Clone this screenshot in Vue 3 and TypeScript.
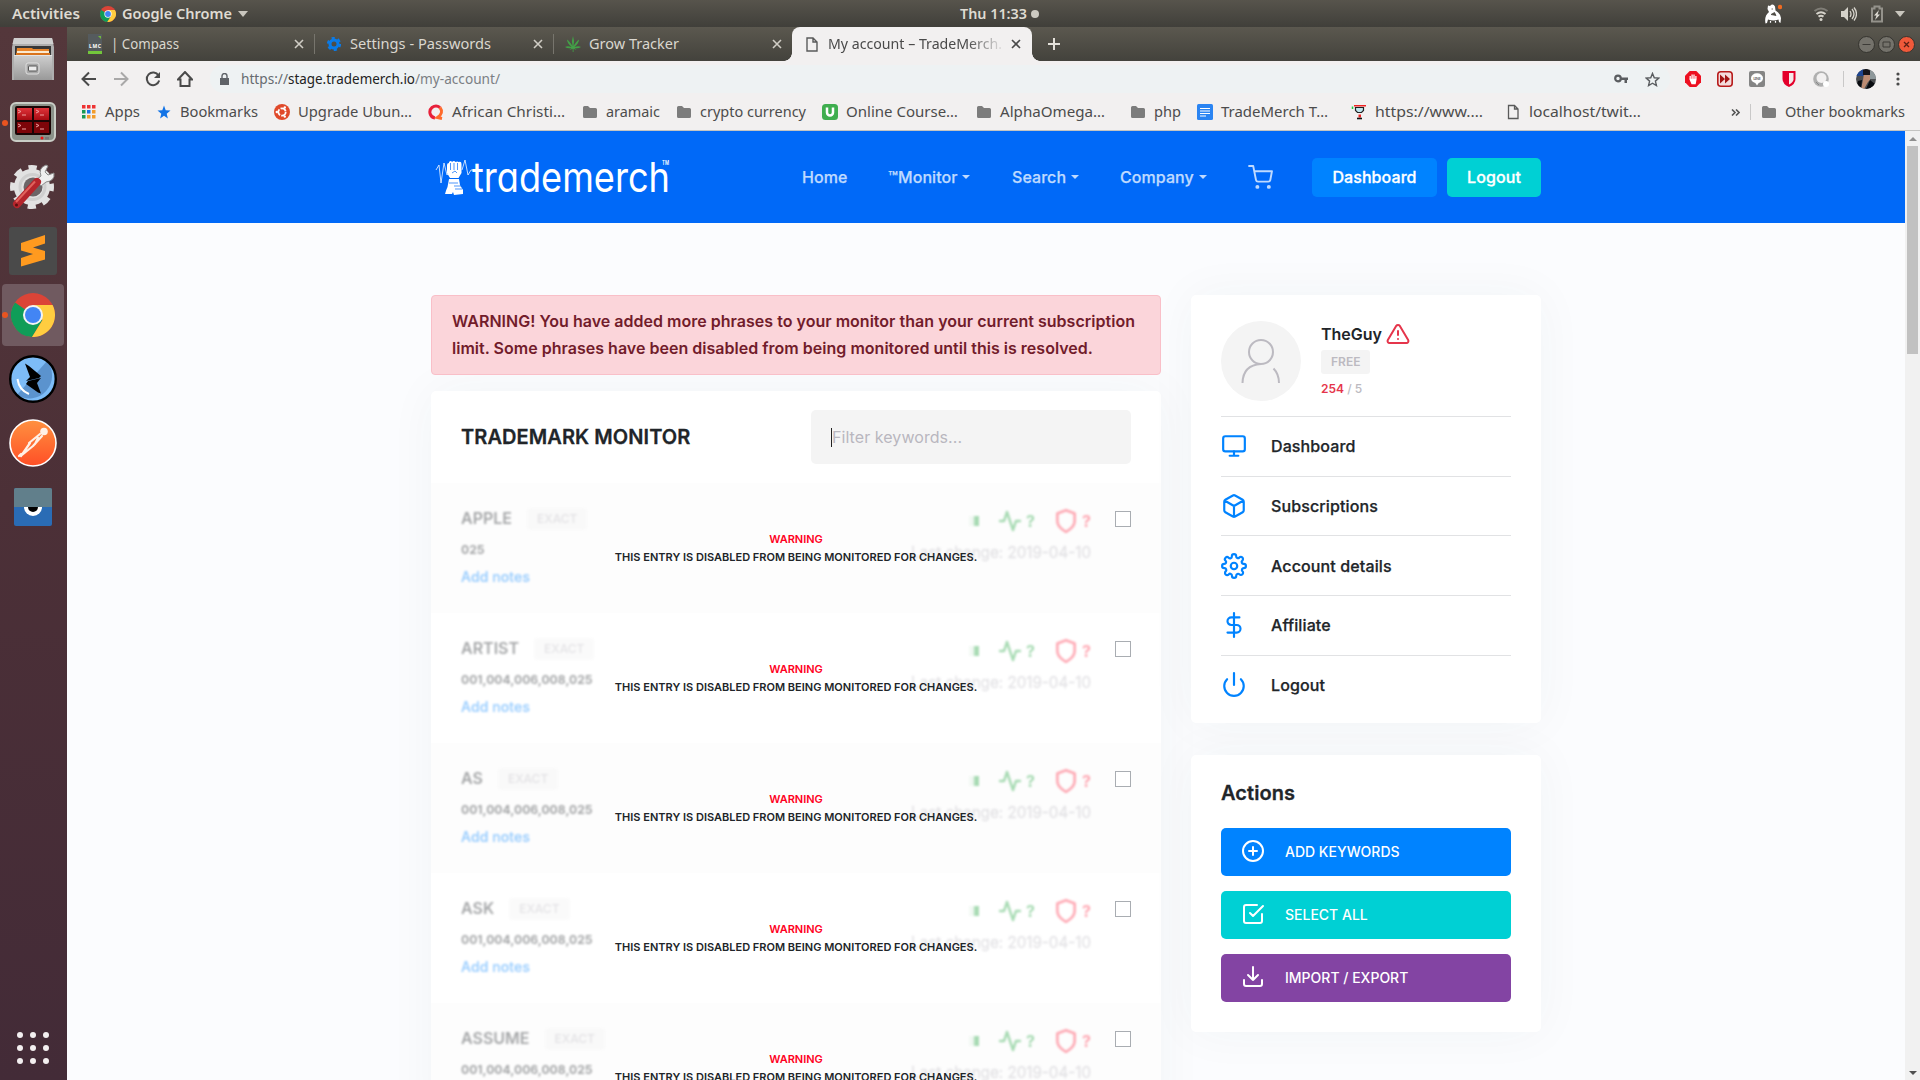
<script setup lang="ts">
import { h, type FunctionalComponent } from 'vue'

interface Bookmark { icon: string; label: string; w: number; gap: number }
interface Keyword { name: string; classes: string }

/* Single-line label set to an exact width, so the bars keep their rhythm with any UI font. */
const FitText: FunctionalComponent<{ text: string; w: number; size?: number }> = (p) =>
  h('svg', { width: p.w, height: 22, viewBox: `0 0 ${p.w} 22`, class: 'fit', overflow: 'visible' }, [
    h('text', {
      x: 0, y: 16, textLength: p.w, lengthAdjust: 'spacingAndGlyphs',
      'font-size': p.size ?? 15, fill: 'currentColor', 'xml:space': 'preserve',
    }, p.text),
  ])
FitText.props = ['text', 'w', 'size']

const bookmarks: Bookmark[] = [
  { icon: 'apps', label: 'Apps', w: 35, gap: 0 },
  { icon: 'star', label: 'Bookmarks', w: 78, gap: 16 },
  { icon: 'ubuntu', label: 'Upgrade Ubun…', w: 114, gap: 16 },
  { icon: 'q', label: 'African Christi…', w: 113, gap: 16 },
  { icon: 'folder', label: 'aramaic', w: 54, gap: 17 },
  { icon: 'folder', label: 'crypto currency', w: 106, gap: 16 },
  { icon: 'u', label: 'Online Course…', w: 112, gap: 16 },
  { icon: 'folder', label: 'AlphaOmega…', w: 105, gap: 18 },
  { icon: 'folder', label: 'php', w: 27, gap: 25 },
  { icon: 'doc', label: 'TradeMerch T…', w: 107, gap: 16 },
  { icon: 'bot', label: 'https://www.…', w: 108, gap: 23 },
  { icon: 'file', label: 'localhost/twit…', w: 112, gap: 22 },
]

const keywords: Keyword[] = [
  { name: 'APPLE', classes: '025' },
  { name: 'ARTIST', classes: '001,004,006,008,025' },
  { name: 'AS', classes: '001,004,006,008,025' },
  { name: 'ASK', classes: '001,004,006,008,025' },
  { name: 'ASSUME', classes: '001,004,006,008,025' },
]

const menu = ['Dashboard', 'Subscriptions', 'Account details', 'Affiliate', 'Logout']
const dots = [0, 1, 2, 3, 4, 5, 6, 7, 8]
const appColors = ['#e33', '#e33', '#e33', '#1a9a55', '#1a73e8', '#f29c2b', '#1a9a55', '#f29c2b', '#f29c2b']
</script>

<template>
  <div class="desktop">
    <header class="topbar">
      <FitText class="act" text="Activities" :w="68" :size="14.5" />
      <svg class="tb-chrome" width="16" height="16" viewBox="0 0 44 44">
        <circle cx="22" cy="22" r="22" fill="#db4437" />
        <path d="M22 22L3 11A22 22 0 0 0 20 44l11-17z" fill="#0f9d58" />
        <path d="M22 11h19A22 22 0 0 1 20 44l11-17z" fill="#ffcd40" />
        <circle cx="22" cy="22" r="10" fill="#fff" /><circle cx="22" cy="22" r="8" fill="#4285f4" />
      </svg>
      <FitText text="Google Chrome" :w="110" :size="14.5" />
      <i class="tri"></i>
      <FitText class="clock" text="Thu 11:33" :w="67" :size="14.5" />
      <i class="dot"></i>
      <span class="grow"></span>
      <svg width="18" height="20" viewBox="0 0 18 20" class="keybase">
        <path d="M4 1.500l2 .5q3-3 5 .5l.5 4Q16 9 17 14l-.5 5-1.500-1-.5-2.500q-5 2-10.500 0L3 19l-1.500.500Q0 12 5 8L3.500 5z" fill="#fff" />
        <path d="M7 10.500l3.500-2 1.500 3zM7.500 5h1.500" stroke="#4b4943" fill="#4b4943" stroke-width=".8" /><path d="M6.500 17v1.800M11.500 17v1.800" stroke="#fff" stroke-width="1.200" />
        <circle cx="16" cy="3" r="2.200" fill="#f26b21" />
      </svg>
      <svg class="wifi" width="16" height="16" viewBox="0 0 16 16" fill="none" stroke="#d6d3cb" stroke-width="2">
        <path d="M1.500 5Q8 0 14.500 5" stroke="#7f7d76" /><path d="M3.500 8Q8 4.500 12.500 8M5.500 10.600Q8 8.800 10.500 10.600" />
        <circle cx="8" cy="13.500" r="1.500" fill="#d6d3cb" stroke="none" />
      </svg>
      <svg class="vol" width="16" height="16" viewBox="0 0 16 16">
        <path d="M0 5h3l4-4v14l-4-4H0z" fill="#d6d3cb" />
        <path d="M9 5q2 3 0 6M11 3q4 5 0 10M13 1.500q5 6.500 0 13" fill="none" stroke="#d6d3cb" stroke-width="1.300" />
      </svg>
      <svg class="bat" width="14" height="18" viewBox="0 0 14 18">
        <path d="M2 3.500h2.500v-2h5v2H12v13H2z" fill="none" stroke="#94928b" stroke-width="2" />
        <path d="M9 5L4 10.500h2.500L5 15l5-5.500H7.500z" fill="#dedbd3" />
      </svg>
      <i class="tri end"></i>
    </header>

    <div class="work">
      <aside class="dock">
        <div class="slot">
          <svg width="44" height="46" viewBox="0 0 44 46">
            <defs><linearGradient id="cab" x2="0" y2="1"><stop stop-color="#cfcfcf" /><stop offset="1" stop-color="#999" /></linearGradient></defs>
            <path d="M3 2h38l2 9v33H1V11z" fill="#aeaeae" /><path d="M3 2h38l1.500 6h-41z" fill="#cfcfcf" />
            <rect x="4" y="10" width="36" height="11" fill="#383838" /><path d="M6 12h15l1 1h16v8H5z" fill="#e8842a" />
            <rect x="6" y="15" width="32" height="2" fill="#fbe9cf" /><rect x="5" y="17" width="34" height="2" fill="#d9731c" />
            <path d="M3 19h38v25H3z" fill="url(#cab)" /><path d="M3 19.500h38" stroke="#e4e4e4" />
            <rect x="15" y="27" width="13" height="11" rx="2" fill="#a8a8a8" stroke="#e0e0e0" />
            <rect x="17.500" y="30" width="8.500" height="5" rx=".5" fill="#ececec" stroke="#555" />
          </svg>
        </div>
        <div class="slot">
          <i class="run"></i>
          <svg width="48" height="44" viewBox="0 0 48 44">
            <defs><linearGradient id="tr" x2="0" y2="1"><stop stop-color="#e0333a" /><stop offset="1" stop-color="#a60b12" /></linearGradient></defs>
            <rect x="2" y="2" width="44" height="38" rx="5" fill="#8b9189" stroke="#c9cdc6" stroke-width="2" />
            <rect x="6" y="5" width="36" height="29" rx="2" fill="#1b0505" />
            <path d="M8 7h15v12H8zM25 7h15v12H25z" fill="url(#tr)" /><path d="M8 21h15v11H8zM25 21h15v11H25z" fill="#7d0509" />
            <path d="M9 9l3 1.500L9 12M13 14h4M27 9l3 1.500-3 1.500M31 14h4M9 23l3 1.500L9 26M13 28h4M27 23l3 1.500-3 1.500M31 28h4" stroke="#eea0a0" fill="none" />
            <circle cx="33" cy="37" r="1.500" fill="#e11" /><rect x="36" y="36" width="4" height="2.500" fill="#777" />
          </svg>
        </div>
        <div class="slot">
          <svg width="46" height="48" viewBox="0 0 46 48">
            <circle cx="22" cy="24" r="18" fill="#e2e2e2" /><circle cx="22" cy="24" r="19.500" fill="none" stroke="#e2e2e2" stroke-width="5" stroke-dasharray="8.300 7.016" stroke-dashoffset="4.150" />
            <circle cx="22.500" cy="24" r="12.500" fill="none" stroke="#cfcfcf" stroke-width="3" /><circle cx="23" cy="24" r="9.500" fill="#6c6567" />
            <path d="M26 17l5-4q-3-8 5-11l2 1-3 6 3 3 6-2q1 8-8 9l-5 4z" fill="#efefef" stroke="#8a8a8a" />
            <path d="M27 19L7 41" stroke="#b5252c" stroke-width="8" stroke-linecap="round" /><path d="M25 18.500L6 39" stroke="#e0625c" stroke-width="2" />
            <circle cx="6.500" cy="42" r="1.500" fill="#5a1010" />
          </svg>
        </div>
        <div class="slot">
          <svg width="48" height="48" viewBox="0 0 48 48">
            <rect width="48" height="48" rx="3" fill="#4a4a4a" /><path d="M12 16l24-8v8.500l-12 4 12 3.500v8.500L12 39.500V31l12-4-12-3.500z" fill="#ff9a1f" />
          </svg>
        </div>
        <div class="slot on">
          <i class="run"></i>
          <svg width="44" height="44" viewBox="0 0 44 44">
            <circle cx="22" cy="22" r="22" fill="#db4437" />
            <path d="M22 22L4 9.400A22 22 0 0 0 21 44l10.500-17z" fill="#0f9d58" />
            <path d="M22 12h19.600A22 22 0 0 1 21 44l10.500-17z" fill="#ffcd40" />
            <circle cx="22" cy="22" r="10" fill="#f4f4f4" /><circle cx="22" cy="22" r="8" fill="#4285f4" />
          </svg>
        </div>
        <div class="slot">
          <svg width="48" height="48" viewBox="0 0 48 48">
            <circle cx="24" cy="24" r="23" fill="#7dbcf7" /><path d="M38 6A23 23 0 0 1 8 40z" fill="#5b93ce" />
            <circle cx="24" cy="24" r="22.800" fill="none" stroke="#000" stroke-width="2.400" />
            <path d="M16 8.500l4 2.500 12 10-2 2-13 3 4-4zM32 38.500l-3-1-12-8.500 2-3 13-3-4 5z" fill="#000" /><path d="M8.500 24Q10 35 20 39" stroke="#fff" stroke-width="2" fill="none" />
          </svg>
        </div>
        <div class="slot">
          <svg width="48" height="48" viewBox="0 0 48 48">
            <defs><linearGradient id="pm" x2="0" y2="1"><stop stop-color="#ff9140" /><stop offset="1" stop-color="#ff4f26" /></linearGradient></defs>
            <circle cx="24" cy="24" r="23" fill="url(#pm)" stroke="#fff" stroke-width="1.600" /><circle cx="35" cy="12.500" r="3.800" fill="#fff0e6" />
            <path d="M31 15L20 24M33 17L24 27M29 19l-3 6M21 24L12 37M24 27L13 36M12 35l-2 2" stroke="#fff0e6" stroke-width="2.200" fill="none" stroke-linecap="round" />
          </svg>
        </div>
        <div class="slot">
          <svg width="38" height="38" viewBox="0 0 38 38">
            <rect width="38" height="38" rx="2" fill="#2a6cb5" /><path d="M0 19V2q0-2 2-2h34q2 0 2 2v17z" fill="#617f8b" />
            <path d="M10 19h18a9 9 0 0 1-18 0z" fill="#fff" /><path d="M14 19h10a5 5 0 0 1-10 0z" fill="#000" />
          </svg>
        </div>
        <div class="launcher"><i v-for="d in dots" :key="d"></i></div>
      </aside>

      <main class="browser">
        <div class="tabs">
          <div class="tab t1">
            <svg width="14" height="20" viewBox="0 0 14 20"><path d="M0 0h14v20H0z" fill="#555b5e" /><path d="M10 2l3 0 0 3z" fill="#73b83b" /><text x="1" y="14" font-size="5" font-weight="700" fill="#fff" textLength="12">LMC</text><path d="M0 17h14v3H0z" fill="#73c63b" /></svg>
            <FitText text="| Compass" :w="68" /><span class="grow"></span>
            <svg class="x" viewBox="0 0 10 10"><path d="M1 1l8 8M9 1L1 9" /></svg>
          </div>
          <div class="tab t2">
            <svg width="14" height="14" viewBox="0 0 14 14"><circle cx="7" cy="7" r="4" fill="none" stroke="#0a7be8" stroke-width="3" /><circle cx="7" cy="7" r="6" fill="none" stroke="#0a7be8" stroke-width="2.200" stroke-dasharray="3.140 3.140" /></svg>
            <FitText text="Settings - Passwords" :w="141" /><span class="grow"></span>
            <svg class="x" viewBox="0 0 10 10"><path d="M1 1l8 8M9 1L1 9" /></svg>
          </div>
          <div class="tab t3">
            <svg width="16" height="16" viewBox="0 0 16 16"><path d="M8 0q2 5 .5 10Q11.500 5 14 3.500q0 3.500-4.500 7.500 4-1.500 6.500 0-3 2-6.500 1l2 2-3-1.200V16h-.8v-3.200L4.500 14l2-2q-3.500 1-6.500-1 2.500-1.500 6.500 0Q2 7 2 3.500 4.500 5 7.500 10 6 5 8 0z" fill="#43a047" /></svg>
            <FitText text="Grow Tracker" :w="90" /><span class="grow"></span>
            <svg class="x" viewBox="0 0 10 10"><path d="M1 1l8 8M9 1L1 9" /></svg>
          </div>
          <div class="tab active">
            <svg width="12" height="15" viewBox="0 0 12 15" fill="none" stroke="#5a5a5a" stroke-width="1.400"><path d="M1 1h6l4 4v9H1zM7 1v4h4" /></svg>
            <FitText class="fade" text="My account – TradeMerch." :w="174" /><span class="grow"></span>
            <svg class="x" viewBox="0 0 10 10"><path d="M1 1l8 8M9 1L1 9" /></svg>
          </div>
          <svg class="plus" width="12" height="12" viewBox="0 0 12 12"><path d="M6 0v12M0 6h12" stroke="#e4e1da" stroke-width="2" /></svg>
          <span class="grow"></span>
          <div class="wins">
            <svg viewBox="0 0 17 17"><circle cx="8.500" cy="8.500" r="8" fill="#74726b" stroke="#35342f" /><path d="M4.500 8.500h8" stroke="#3c3b37" /></svg>
            <svg viewBox="0 0 17 17"><circle cx="8.500" cy="8.500" r="8" fill="#74726b" stroke="#35342f" /><path d="M5 6h7v5H5z" stroke="#3c3b37" fill="none" /></svg>
            <svg viewBox="0 0 17 17"><circle cx="8.500" cy="8.500" r="8" fill="#f0593a" stroke="#35342f" /><path d="M6 6l5 5M11 6l-5 5" stroke="#5c2015" stroke-width="1.300" /></svg>
          </div>
        </div>

        <div class="toolbar">
          <svg class="nv" viewBox="0 0 16 16"><path d="M15 8H2M8 1.500L1.500 8 8 14.500" /></svg>
          <svg class="nv off" viewBox="0 0 16 16"><path d="M1 8h13M8 1.500L14.500 8 8 14.500" /></svg>
          <svg class="nv" viewBox="0 0 16 16"><path d="M13.500 4.500A6.300 6.300 0 1 0 14.200 9.500" /><path d="M15 1v6H9z" fill="#4a4a4a" stroke="none" /></svg>
          <svg class="nv" viewBox="0 0 16 16"><path d="M1 8.500L8 1l7 7.500H12.500V15h-9V8.500z" /></svg>
          <div class="omni">
            <svg width="9" height="12" viewBox="0 0 9 12"><path d="M0 5h9v7H0z" fill="#5f6368" /><path d="M2 5V3a2.500 2.500 0 0 1 5 0v2" fill="none" stroke="#5f6368" stroke-width="1.400" /></svg>
            <svg class="url" width="260" height="22" viewBox="0 0 260 22" font-size="15"><text x="0" y="16" textLength="47" lengthAdjust="spacingAndGlyphs" fill="#666b70">https://</text><text x="47" y="16" textLength="127" lengthAdjust="spacingAndGlyphs" fill="#222">stage.trademerch.io</text><text x="174" y="16" textLength="85" lengthAdjust="spacingAndGlyphs" fill="#7b7f84">/my-account/</text></svg>
            <span class="grow"></span>
            <svg width="14" height="10" viewBox="0 0 14 10"><circle cx="4" cy="4.500" r="2.800" fill="none" stroke="#5a5d60" stroke-width="2.200" /><path d="M7 3.500h7v2.500h-1v3h-2.500V6H7z" fill="#5a5d60" /></svg>
            <svg class="fav" width="15" height="15" viewBox="0 0 16 16"><path d="M8 1.500l1.900 4.600 4.900.4-3.700 3.200 1.100 4.800L8 12l-4.200 2.500 1.100-4.800L1.200 6.500l4.900-.4z" fill="none" stroke="#5a5d60" stroke-width="1.500" /></svg>
          </div>
          <div class="ext">
            <svg viewBox="0 0 16 16"><path d="M4.700 0h6.600L16 4.700v6.600L11.300 16H4.700L0 11.300V4.700z" fill="#ed1021" /><path d="M5.200 9V5M7.100 8V3.500M9 8V3.500M10.900 9V5M5.200 8.500h5.700l-.8 4H7z" stroke="#fff" stroke-width="1.300" fill="#fff" /></svg>
            <svg viewBox="0 0 16 16"><rect x=".8" y=".8" width="14.400" height="14.400" rx="3" fill="#f4dcdc" stroke="#b71c1c" stroke-width="1.600" /><path d="M3 3.500L8 8l-5 4.500zM8 3.500L13 8l-5 4.500z" fill="#a31515" /></svg>
            <svg viewBox="0 0 16 16"><rect width="16" height="16" rx="2" fill="#858585" /><ellipse cx="8" cy="7.300" rx="6" ry="5" fill="#fff" /><path d="M6 11.500l2 3 2-3" fill="#fff" /><text x="4.200" y="9" font-size="4" font-weight="700" textLength="7.600" fill="#777">LINE</text></svg>
            <svg viewBox="0 0 16 16"><path d="M1.500 0h13v8q0 5-6.500 8-6.500-3-6.500-8z" fill="#e4002b" /><path d="M8 2h4.500v6.500Q12 11.500 8 13.500z" fill="#f4e9ea" /></svg>
            <svg viewBox="0 0 16 16"><circle cx="8" cy="8" r="7.800" fill="#b0b0b0" /><circle cx="8.500" cy="7" r="5" fill="#f2f0f0" /><circle cx="13" cy="13" r="3" fill="#fff" /><path d="M3 11l3 3" stroke="#888" /></svg>
          </div>
          <i class="vsep"></i>
          <svg class="me" width="20" height="20" viewBox="0 0 20 20"><defs><clipPath id="face"><circle cx="10" cy="10" r="10" /></clipPath></defs><g clip-path="url(#face)"><path d="M0 0h20v20H0z" fill="#4b4d50" /><path d="M0 0h8v7H0z" fill="#1e4590" /><path d="M14 0h6v10h-6z" fill="#8e989b" /><path d="M8 4h6v7l-2 2-4 7H5l2-9z" fill="#bd8c73" /><path d="M7 1q4-3 7 1v4H7z" fill="#15151b" /><path d="M2 12l4-1-1 9H0zM14 11l5 4-1 5h-8z" fill="#090b10" /></g></svg>
          <svg class="dots" width="4" height="16" viewBox="0 0 4 16" fill="#4a4a4a"><circle cx="2" cy="3" r="1.600" /><circle cx="2" cy="8" r="1.600" /><circle cx="2" cy="13" r="1.600" /></svg>
        </div>

        <div class="marks">
          <div v-for="b in bookmarks" :key="b.label" class="mark" :style="{ marginLeft: b.gap + 'px' }">
            <svg v-if="b.icon === 'apps'" viewBox="0 0 16 16"><rect v-for="d in dots" :key="d" :x="1 + (d % 3) * 5" :y="1 + Math.floor(d / 3) * 5" width="3.500" height="3.500" :fill="appColors[d]" /></svg>
            <svg v-else-if="b.icon === 'star'" viewBox="0 0 16 16"><path d="M8 1.500l1.700 4.700 4.800.3-3.800 3.200 1.200 4.800L8 11.800l-3.900 2.700 1.200-4.800-3.800-3.200 4.800-.3z" fill="#1273e6" /></svg>
            <svg v-else-if="b.icon === 'ubuntu'" viewBox="0 0 16 16"><circle cx="8" cy="8" r="8" fill="#e0492a" /><circle cx="8" cy="8" r="3.700" fill="none" stroke="#fff" stroke-width="1.800" stroke-dasharray="6.500 1.250" /><g fill="#fff"><circle cx="2.800" cy="8" r="1.200" /><circle cx="10.800" cy="3.400" r="1.200" /><circle cx="10.800" cy="12.600" r="1.200" /></g></svg>
            <svg v-else-if="b.icon === 'q'" viewBox="0 0 16 16"><path d="M7 14A6 6 0 0 1 4 3.500Q8 .5 12 3.500" fill="none" stroke="#e8203a" stroke-width="3" /><path d="M12 3.500Q16 9 9.500 13.500l4.500 1" fill="none" stroke="#ff6a2b" stroke-width="3" /></svg>
            <svg v-else-if="b.icon === 'folder'" viewBox="0 0 16 16"><path d="M1 3.500Q1 2 2.500 2H6l2 2h5.500Q15 4 15 5.500v7q0 1.500-1.500 1.500h-11Q1 14 1 12.500z" fill="#7c7c7c" /></svg>
            <svg v-else-if="b.icon === 'u'" viewBox="0 0 16 16"><rect width="16" height="16" rx="3.500" fill="#3fae4f" /><path d="M5 3.500v5a3 3 0 0 0 6 0v-5" fill="none" stroke="#fff" stroke-width="2.500" /></svg>
            <svg v-else-if="b.icon === 'doc'" viewBox="0 0 16 16"><rect width="16" height="16" rx="1.500" fill="#2a84f2" /><path d="M3 4.500h10M3 7h10M3 9.500h10M3 12h6" stroke="#fff" stroke-width="1.200" /></svg>
            <svg v-else-if="b.icon === 'bot'" viewBox="0 0 16 16"><path d="M4.500 3.500h8v3l-2 2h-4l-2-2z" stroke="#222" fill="#bfe6ee" stroke-width="1.200" /><path d="M3 1h12v1.500H3zM7.500 10.500h2.500v3H7.500z" fill="#e22" /><path d="M6 14.500h5" stroke="#111" stroke-width="1.600" /><path d="M1.500 2.500v2.500" stroke="#2c4" stroke-width="1.500" /></svg>
            <svg v-else viewBox="0 0 16 16" fill="none" stroke="#5a5a5a" stroke-width="1.300"><path d="M3.500 1.500h6l3.500 3.500v9.500H3.500zM9.500 1.500V5H13" /></svg>
            <FitText :text="b.label" :w="b.w" />
          </div>
          <span class="grow"></span>
          <svg class="more" width="9" height="7" viewBox="0 0 9 7"><path d="M1 .5l3 3-3 3M5 .5l3 3-3 3" fill="none" stroke="#555" stroke-width="1.600" /></svg>
          <i class="vsep"></i>
          <div class="mark other">
            <svg viewBox="0 0 16 16"><path d="M1 3.500Q1 2 2.500 2H6l2 2h5.500Q15 4 15 5.500v7q0 1.500-1.500 1.500h-11Q1 14 1 12.500z" fill="#7c7c7c" /></svg>
            <FitText text="Other bookmarks" :w="120" />
          </div>
        </div>

        <div class="view">
          <div class="page">
            <nav class="site">
              <svg class="logo" width="240" height="44" viewBox="0 0 240 44">
                <path d="M1 15l3-5 2 18L9 8l3 12 3-4M27 15l3-10 3 15 3-5 2 0" fill="none" stroke="#fff" stroke-width=".9" opacity=".85" />
                <path d="M12 10q0-2 2-2v-1q2-2 3 0 2-2 3.500 0 2-1 3 0 3-1 3 2v9l-3 5H15l-3-5z" fill="#fff" /><path d="M15.500 8v7M19 8v7M22.500 8v7M17 18l3-2 2 2" stroke="#0069f8" stroke-width=".7" fill="none" />
                <path d="M14 24h10l1 6 3 5v4l-9 1-1-3-1 2h-7q1-4 2.500-7z" fill="#fff" /><path d="M14 28h9M19 31h7M20 34h7" stroke="#0069f8" stroke-width=".7" />
                <text class="word" x="37" y="37" font-size="41" textLength="198" lengthAdjust="spacingAndGlyphs" fill="#fff">trademerch</text>
                <text x="227" y="10" font-family="Inter, sans-serif" font-size="5.500" font-weight="600" textLength="7" lengthAdjust="spacingAndGlyphs" fill="#fff">TM</text>
              </svg>
              <a class="n1">Home</a>
              <a class="n2">™Monitor<i></i></a>
              <a class="n3">Search<i></i></a>
              <a class="n4">Company<i></i></a>
              <svg class="cart" width="25" height="25" viewBox="0 0 24 24" fill="none" stroke="#bfdaff" stroke-width="1.800" stroke-linecap="round" stroke-linejoin="round"><circle cx="9" cy="21" r="1" /><circle cx="20" cy="21" r="1" /><path d="M1 1h4l2.680 13.390a2 2 0 0 0 2 1.610h9.720a2 2 0 0 0 2-1.610L23 6H6" /></svg>
              <button class="nb dash">Dashboard</button>
              <button class="nb out">Logout</button>
            </nav>

            <div class="content">
              <section class="left">
                <div class="alert">WARNING! You have added more phrases to your monitor than your current subscription limit. Some phrases have been disabled from being monitored until this is resolved.</div>
                <div class="card list">
                  <div class="lhead">
                    <h2>TRADEMARK MONITOR</h2>
                    <div class="filter"><span>Filter keywords...</span></div>
                  </div>
                  <div v-for="k in keywords" :key="k.name" class="row">
                    <div class="dim">
                      <div class="info">
                        <div class="nm"><b>{{ k.name }}</b><em>EXACT</em></div>
                        <div class="cls">{{ k.classes }}</div>
                        <a>Add notes</a>
                      </div>
                      <div class="stat">
                        <div class="ics">
                          <i class="bar"></i>
                          <svg class="pulse" width="24" height="24" viewBox="0 0 24 24"><path d="M22 12h-4l-3 9L9 3l-3 9H2" /></svg><b class="g">?</b>
                          <svg class="shield" width="26" height="26" viewBox="0 0 24 24"><path d="M12 22s8-4 8-10V5l-8-3-8 3v7c0 6 8 10 8 10z" /></svg><b class="r">?</b>
                        </div>
                        <div class="date">Last change: 2019-04-10</div>
                      </div>
                    </div>
                    <i class="check"></i>
                    <div class="warn"><span>WARNING</span>THIS ENTRY IS DISABLED FROM BEING MONITORED FOR CHANGES.</div>
                  </div>
                </div>
              </section>

              <section class="side">
                <div class="card prof">
                  <div class="user">
                    <div class="ava"><svg width="40" height="46" viewBox="0 0 40 46" fill="none" stroke="#bcbac1" stroke-width="2"><circle cx="20" cy="14" r="12" /><path d="M1.500 45Q2 27 20 26M32.500 30.500Q38 36 38 45" /></svg></div>
                    <div class="who">
                      <div class="un">TheGuy<svg width="24" height="24" viewBox="0 0 24 24" fill="none" stroke="#e5354b" stroke-width="2" stroke-linecap="round" stroke-linejoin="round"><path d="M10.290 3.860L1.820 18a2 2 0 0 0 1.710 3h16.940a2 2 0 0 0 1.710-3L13.710 3.860a2 2 0 0 0-3.420 0zM12 9v4M12 17h.01" /></svg></div>
                      <span class="free">FREE</span>
                      <div class="cnt"><b>254</b> / 5</div>
                    </div>
                  </div>
                  <div v-for="(m, i) in menu" :key="m" class="mi">
                    <svg width="26" height="26" viewBox="0 0 24 24">
                      <template v-if="i === 0"><rect x="2" y="3" width="20" height="14" rx="2" /><path d="M8 21h8M12 17v4" /></template>
                      <path v-else-if="i === 1" d="M21 16V8a2 2 0 0 0-1-1.730l-7-4a2 2 0 0 0-2 0l-7 4A2 2 0 0 0 3 8v8a2 2 0 0 0 1 1.730l7 4a2 2 0 0 0 2 0l7-4A2 2 0 0 0 21 16zM3.270 6.960L12 12.010l8.730-5.050M12 22.080V12" />
                      <template v-else-if="i === 2"><circle cx="12" cy="12" r="3" /><path d="M19.400 15a1.650 1.650 0 0 0 .33 1.820l.06.06a2 2 0 1 1-2.830 2.830l-.06-.06a1.650 1.650 0 0 0-2.820 1.170V21a2 2 0 0 1-4 0v-.09A1.650 1.650 0 0 0 7.180 19.730l-.06.06a2 2 0 1 1-2.830-2.830l.06-.06A1.650 1.650 0 0 0 3.180 14H3a2 2 0 0 1 0-4h.09A1.650 1.650 0 0 0 4.270 7.180l-.06-.06a2 2 0 1 1 2.830-2.830l.06.06A1.650 1.650 0 0 0 10 3.180V3a2 2 0 0 1 4 0v.09a1.650 1.650 0 0 0 2.820 1.180l.06-.06a2 2 0 1 1 2.830 2.830l-.06.06A1.650 1.650 0 0 0 20.910 10H21a2 2 0 0 1 0 4h-.09a1.650 1.650 0 0 0-1.510 1z" /></template>
                      <path v-else-if="i === 3" d="M12 1v22M17 5H9.500a3.500 3.500 0 0 0 0 7h5a3.500 3.500 0 0 1 0 7H6" />
                      <path v-else d="M18.360 6.640a9 9 0 1 1-12.730 0M12 1v11" />
                    </svg>
                    <span>{{ m }}</span>
                  </div>
                </div>

                <div class="card acts">
                  <h2>Actions</h2>
                  <button class="ab c1"><svg width="24" height="24" viewBox="0 0 24 24"><circle cx="12" cy="12" r="10" /><path d="M12 8v8M8 12h8" /></svg><span>ADD KEYWORDS</span></button>
                  <button class="ab c2"><svg width="24" height="24" viewBox="0 0 24 24"><path d="M9 11l3 3L22 4M21 12v7a2 2 0 0 1-2 2H5a2 2 0 0 1-2-2V5a2 2 0 0 1 2-2h11" /></svg><span>SELECT ALL</span></button>
                  <button class="ab c3"><svg width="24" height="24" viewBox="0 0 24 24"><path d="M21 15v4a2 2 0 0 1-2 2H5a2 2 0 0 1-2-2v-4M7 10l5 5 5-5M12 15V2" /></svg><span>IMPORT / EXPORT</span></button>
                </div>
              </section>
            </div>
          </div>
          <div class="scroll"><i class="up"></i><i class="thumb"></i><span class="grow"></span><i class="down"></i></div>
        </div>
      </main>
    </div>
  </div>
</template>

<style>
html, body { margin: 0; overflow: hidden; background: #fff; }
</style>

<style scoped>
* { box-sizing: border-box; }
svg { display: block; flex: none; }
i { display: block; flex: none; font-style: normal; }
.grow { flex: 1; }
.desktop { width: 1920px; height: 1080px; display: flex; flex-direction: column; overflow: hidden; font-family: "Noto Sans", "Open Sans", sans-serif; }
.topbar { height: 27px; flex: none; display: flex; align-items: center; padding: 0 15px 0 12px; background: linear-gradient(#57544c, #403f3a); color: #dfdbd2; font-weight: 600; }
.tb-chrome { margin: 0 6px 0 20px; }
.tri { width: 0; border: 5px solid transparent; border-top: 6px solid #c9c6be; border-bottom: 0; margin-left: 6px; }
.tri.end { margin-left: 11px; }
.clock { margin-left: 712px; }
.dot { width: 8px; height: 8px; border-radius: 50%; background: #ccc9c1; margin-left: 4px; }
.wifi { margin-left: 31px; }
.vol { margin-left: 12px; }
.bat { margin-left: 13px; }
.work { flex: 1; display: flex; min-height: 0; }
.dock { width: 67px; flex: none; display: flex; flex-direction: column; background: linear-gradient(#54373b, #4c3037 45%, #432b37); }
.slot { height: 64px; width: 66px; display: flex; align-items: center; justify-content: center; position: relative; }
.slot.on { background: #705a60; height: 62px; width: 62px; margin: 1px 2px; border-radius: 4px; }
.run { position: absolute; left: 2px; top: 29px; width: 6px; height: 6px; border-radius: 50%; background: #e95420; }
.slot.on .run { left: 0; top: 28px; }
.launcher { margin: auto 0 16px 17px; display: grid; grid-template-columns: repeat(3, 6px); gap: 7px; }
.launcher i { width: 6px; height: 6px; border-radius: 50%; background: #f3eff0; }
.browser { flex: 1; display: flex; flex-direction: column; min-width: 0; background: #f2f0f0; }
.tabs { height: 34px; flex: none; display: flex; align-items: center; background: linear-gradient(#5b584f, #43423c); color: #dad7cf; }
.tab { display: flex; align-items: center; height: 34px; }
.x { width: 10px; height: 10px; stroke: #d0cdc5; stroke-width: 1.600; fill: none; }
.t1, .t2 { background: linear-gradient(#77756d, #77756d) no-repeat right 7px / 1px 20px; }
.t1 { width: 248px; padding: 0 11px 0 21px; gap: 9px; }
.t2 { width: 239px; padding: 0 11px 0 12px; gap: 9px; }
.t3 { width: 238px; padding: 0 10px 0 11px; gap: 8px; }
.tab.active { width: 240px; background: #f2f0f0; border-radius: 8px 8px 0 0; padding: 0 11px 0 14px; color: #4a4a4a; position: relative; }
.tab.active .fade { margin-left: 10px; }
.tab.active::before, .tab.active::after { content: ""; position: absolute; bottom: 0; width: 8px; height: 8px; }
.tab.active::before { left: -8px; background: radial-gradient(circle at 0 0, transparent 7.500px, #f2f0f0 8px); }
.tab.active::after { right: -8px; background: radial-gradient(circle at 100% 0, transparent 7.500px, #f2f0f0 8px); }
.active .x { stroke: #4a4a4a; }
.fade { -webkit-mask-image: linear-gradient(90deg, #000 80%, transparent 102%); mask-image: linear-gradient(90deg, #000 80%, transparent 102%); }
.plus { margin-left: 16px; }
.wins { display: flex; gap: 3px; margin-right: 5px; }
.wins svg { width: 17px; height: 17px; }
.toolbar { height: 36px; flex: none; display: flex; align-items: center; padding-left: 14px; }
.nv { width: 16px; height: 16px; margin-right: 16px; fill: none; stroke: #4a4a4a; stroke-width: 2; }
.nv.off { stroke: #a9a8a8; }
.omni { width: 1460px; height: 28px; margin-left: 1px; border-radius: 14px; background: #eef2f3; display: flex; align-items: center; padding: 0 10px 0 10px; }
.url { margin-left: 12px; }
.fav { margin-left: 17px; }
.ext { display: flex; gap: 16px; margin-left: 15px; }
.ext svg { width: 16px; height: 16px; }
.vsep { width: 1px; height: 16px; background: #c9c8c8; }
.toolbar .vsep { margin-left: 14px; }
.me { margin-left: 12px; }
.dots { margin-left: 20px; }
.marks { height: 34px; flex: none; display: flex; align-items: center; padding: 0 15px 3px 14px; border-bottom: 1px solid #c4c4c2; color: #4c4c4c; }
.mark { display: flex; align-items: center; gap: 8px; flex: none; }
.mark > svg:first-child { width: 16px; height: 16px; }
.more { margin-right: 10px; }
.other { margin-left: 10px; }
.view { flex: 1; display: flex; min-height: 0; font-family: Inter, sans-serif; color: #212529; }
.page { width: 1838px; background: #fbfcfe; overflow: hidden; }
.scroll { width: 15px; background: #f1f1f1; display: flex; flex-direction: column; align-items: center; }
.up { border: 4px solid transparent; border-bottom: 4px solid #8f8f8f; border-top: 0; margin: 6px 0 5px; }
.thumb { width: 11px; height: 208px; background: #c1c1c1; }
.down { border: 4px solid transparent; border-top: 4px solid #505050; border-bottom: 0; margin-bottom: 5px; }
.site { height: 92px; background: #0069f8; display: flex; align-items: center; padding-left: 368px; font-size: 16px; font-weight: 500; letter-spacing: .06px; -webkit-text-stroke: .25px; color: #bfdaff; white-space: nowrap; }
.logo { flex: none; letter-spacing: 0; -webkit-text-stroke: 0; }
.word { font-family: Inter, sans-serif; font-weight: 400; font-feature-settings: "cv11"; }
.site a { display: flex; align-items: center; flex: none; }
.site a i { border: 4.500px solid transparent; border-top: 4.500px solid #bfdaff; border-bottom: 0; margin-left: 5px; }
.n1 { width: 86px; margin-left: 127px; }
.n2 { width: 124px; }
.n3 { width: 108px; }
.n4 { width: 128px; }
.cart { margin-top: 1px; }
.nb { height: 39px; border: 0; border-radius: 5px; font: 500 16px Inter, sans-serif; letter-spacing: .08px; -webkit-text-stroke: .3px; color: #fff; padding: 0; flex: none; }
.dash { width: 125px; background: #0083ff; margin-left: 39px; }
.out { width: 94px; background: #00d0d4; margin-left: 10px; }
.content { display: flex; gap: 30px; padding: 72px 0 0 364px; align-items: flex-start; }
.left { width: 730px; flex: none; }
.alert { height: 80px; border: 1px solid #f9bfc8; border-radius: 4px; background: #fbd5da; color: #721c2b; padding: 12px 20px; font-size: 16px; font-weight: 600; line-height: 27px; letter-spacing: .02px; position: relative; z-index: 1; }
.card { background: #fff; border-radius: 5px; box-shadow: 0 0 50px rgba(50, 65, 80, .045); }
.list { margin-top: 16px; }
.lhead { height: 92px; display: flex; align-items: center; justify-content: space-between; padding: 0 30px; }
h2 { margin: 0; font-size: 20px; font-weight: 600; line-height: 24px; letter-spacing: .08px; -webkit-text-stroke: .3px; }
.filter { width: 320px; height: 54px; border-radius: 5px; background: #f4f4f4; padding: 18px 20px; font-size: 16px; line-height: 19px; letter-spacing: .06px; color: #b9b7bf; }
.filter span { display: block; border-left: 1px solid #222; height: 19px; }
.row { height: 130px; position: relative; display: flex; padding: 0 30px; }
.row:nth-child(even) { background: #fdfdfd; }
.dim { flex: 1; display: flex; justify-content: space-between; opacity: .4; filter: blur(1px); }
.info { padding-top: 24px; }
.nm { display: flex; align-items: center; height: 24px; }
.nm b { font-size: 16px; font-weight: 600; margin-top: -2px; }
.nm em { font-style: normal; font-size: 12px; font-weight: 500; color: #bcbac1; background: #f4f4f4; height: 22px; line-height: 22px; padding: 0 10px; margin-left: 15px; border-radius: 3px; }
.cls { margin-top: 9px; font-size: 12.100px; font-weight: 650; line-height: 20px; }
.info a { display: block; margin-top: 5px; font-size: 14px; font-weight: 500; letter-spacing: .1px; -webkit-text-stroke: .2px; line-height: 24px; color: #0083ff; }
.stat { padding: 25px 10px 0 0; }
.ics { display: flex; align-items: center; justify-content: flex-end; height: 26px; }
.bar { width: 10px; height: 10px; background: linear-gradient(90deg, #e2f2e6 4px, #28a745 6px); }
.pulse, .shield { fill: none; stroke: #28a745; stroke-width: 2.400; stroke-linejoin: round; stroke-linecap: round; }
.pulse { margin: 0 4px 0 19px; }
.shield { stroke: #ff2a45; margin: 0 3px 0 18px; }
.ics b { font-size: 16px; font-weight: 700; }
.g { color: #28a745; }
.r { color: #ff2a45; }
.date { font-size: 15.200px; line-height: 24px; color: #bcbac1; margin-top: 7px; text-align: right; -webkit-text-stroke: .3px; }
.check { width: 16px; height: 16px; border: 1px solid #a9adb2; background: #fff; margin: 28px 0 0 14px; }
.warn { position: absolute; inset: 47px 0 auto 0; text-align: center; font-size: 11px; font-weight: 600; line-height: 18px; }
.warn span { display: block; color: #ff0022; }
.side { width: 350px; flex: none; }
.prof { height: 428px; padding: 26px 30px 0; }
.user { height: 95px; display: flex; gap: 20px; }
.ava { width: 80px; height: 80px; border-radius: 50%; background: #f4f4f4; display: flex; justify-content: center; padding-top: 17px; }
.un { display: flex; align-items: center; height: 26px; font-size: 16px; font-weight: 580; gap: 4px; }
.who { display: flex; flex-direction: column; align-items: flex-start; }
.free { background: #f4f4f4; border-radius: 3px; color: #bcbac1; height: 24px; line-height: 24px; padding: 0 10px; font-size: 12px; font-weight: 600; margin-top: 3px; }
.cnt { font-size: 12px; font-weight: 500; color: #bcbac1; line-height: 20px; margin-top: 5px; }
.cnt b { color: #e5354b; font-weight: 600; }
.mi { height: 59.650px; border-top: 1px solid #e1e2e4; display: flex; align-items: center; gap: 24px; font-size: 16px; font-weight: 500; letter-spacing: .12px; -webkit-text-stroke: .25px; }
.mi svg { fill: none; stroke: #0083ff; stroke-width: 2; stroke-linecap: round; stroke-linejoin: round; }
.acts { margin-top: 32px; height: 277px; padding: 26px 30px 0; }
.ab { width: 290px; height: 48px; border: 0; border-radius: 5px; display: flex; align-items: center; padding: 0 20px; gap: 20px; color: #fff; font: 500 14px Inter, sans-serif; margin-bottom: 15px; }
.ab svg { fill: none; stroke: #fff; stroke-width: 2; stroke-linecap: round; stroke-linejoin: round; margin-top: -2px; }
.ab span { margin-top: -1px; }
.acts h2 { margin-bottom: 23px; }
.c1 { background: #0083ff; }
.c2 { background: #00d0d4; }
.c3 { background: #8344a3; }
</style>
